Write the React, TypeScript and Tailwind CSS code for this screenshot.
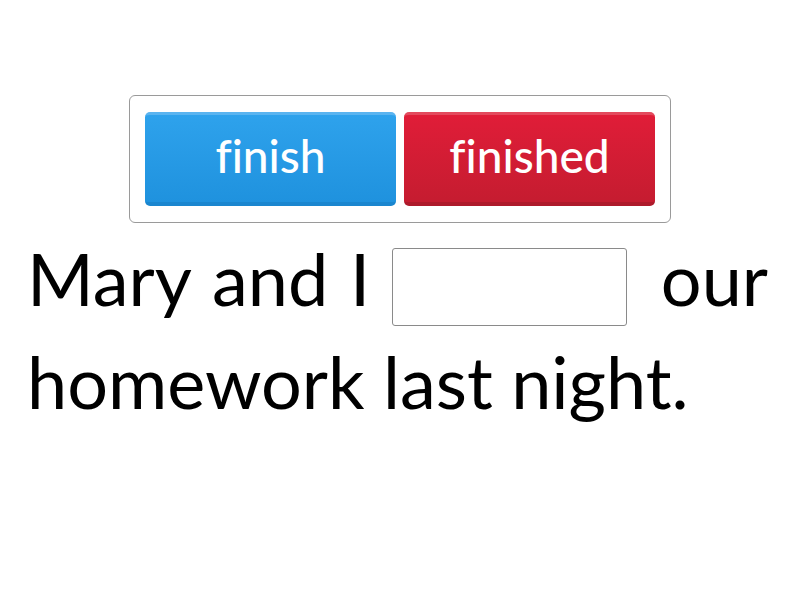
import React from 'react';

const options = [
  { label: 'finish', tone: 'blue' },
  { label: 'finished', tone: 'red' },
];

export default function App() {
  return (
    <div className="min-h-screen w-[800px] bg-white font-['Lato',sans-serif] text-black [font-variant-ligatures:none]">
      <div className="flex justify-center pt-[95px]">
        <div className="flex gap-[8px] rounded-[6px] border border-[#9a9a9a] px-[15px] py-[16px]">
          {options.map((o) => (
            <button
              key={o.label}
              className={`flex h-[94px] w-[251px] items-center justify-center rounded-[5px] border-t-[3px] border-b-[4px] pb-[6px] text-[46px] font-medium leading-none text-white ${
                o.tone === 'blue'
                  ? 'border-t-[#5ab4f0] border-b-[#1a86cf] bg-gradient-to-b from-[#2ea2ec] to-[#1f92de]'
                  : 'border-t-[#e34a5d] border-b-[#ae1a2b] bg-gradient-to-b from-[#e01d38] to-[#c51c30]'
              }`}
            >
              {o.label}
            </button>
          ))}
        </div>
      </div>
      <p className="mt-[4px] pl-[27px] pr-[32px] text-justify text-[72px] leading-[103px]">
        Mary and I{' '}
        <span className="ml-0 mr-[12px] inline-block h-[78px] w-[235px] rounded-[3px] border border-[#8a8a8a] align-[-20px]"></span>{' '}
        our homework last night.
      </p>
    </div>
  );
}
